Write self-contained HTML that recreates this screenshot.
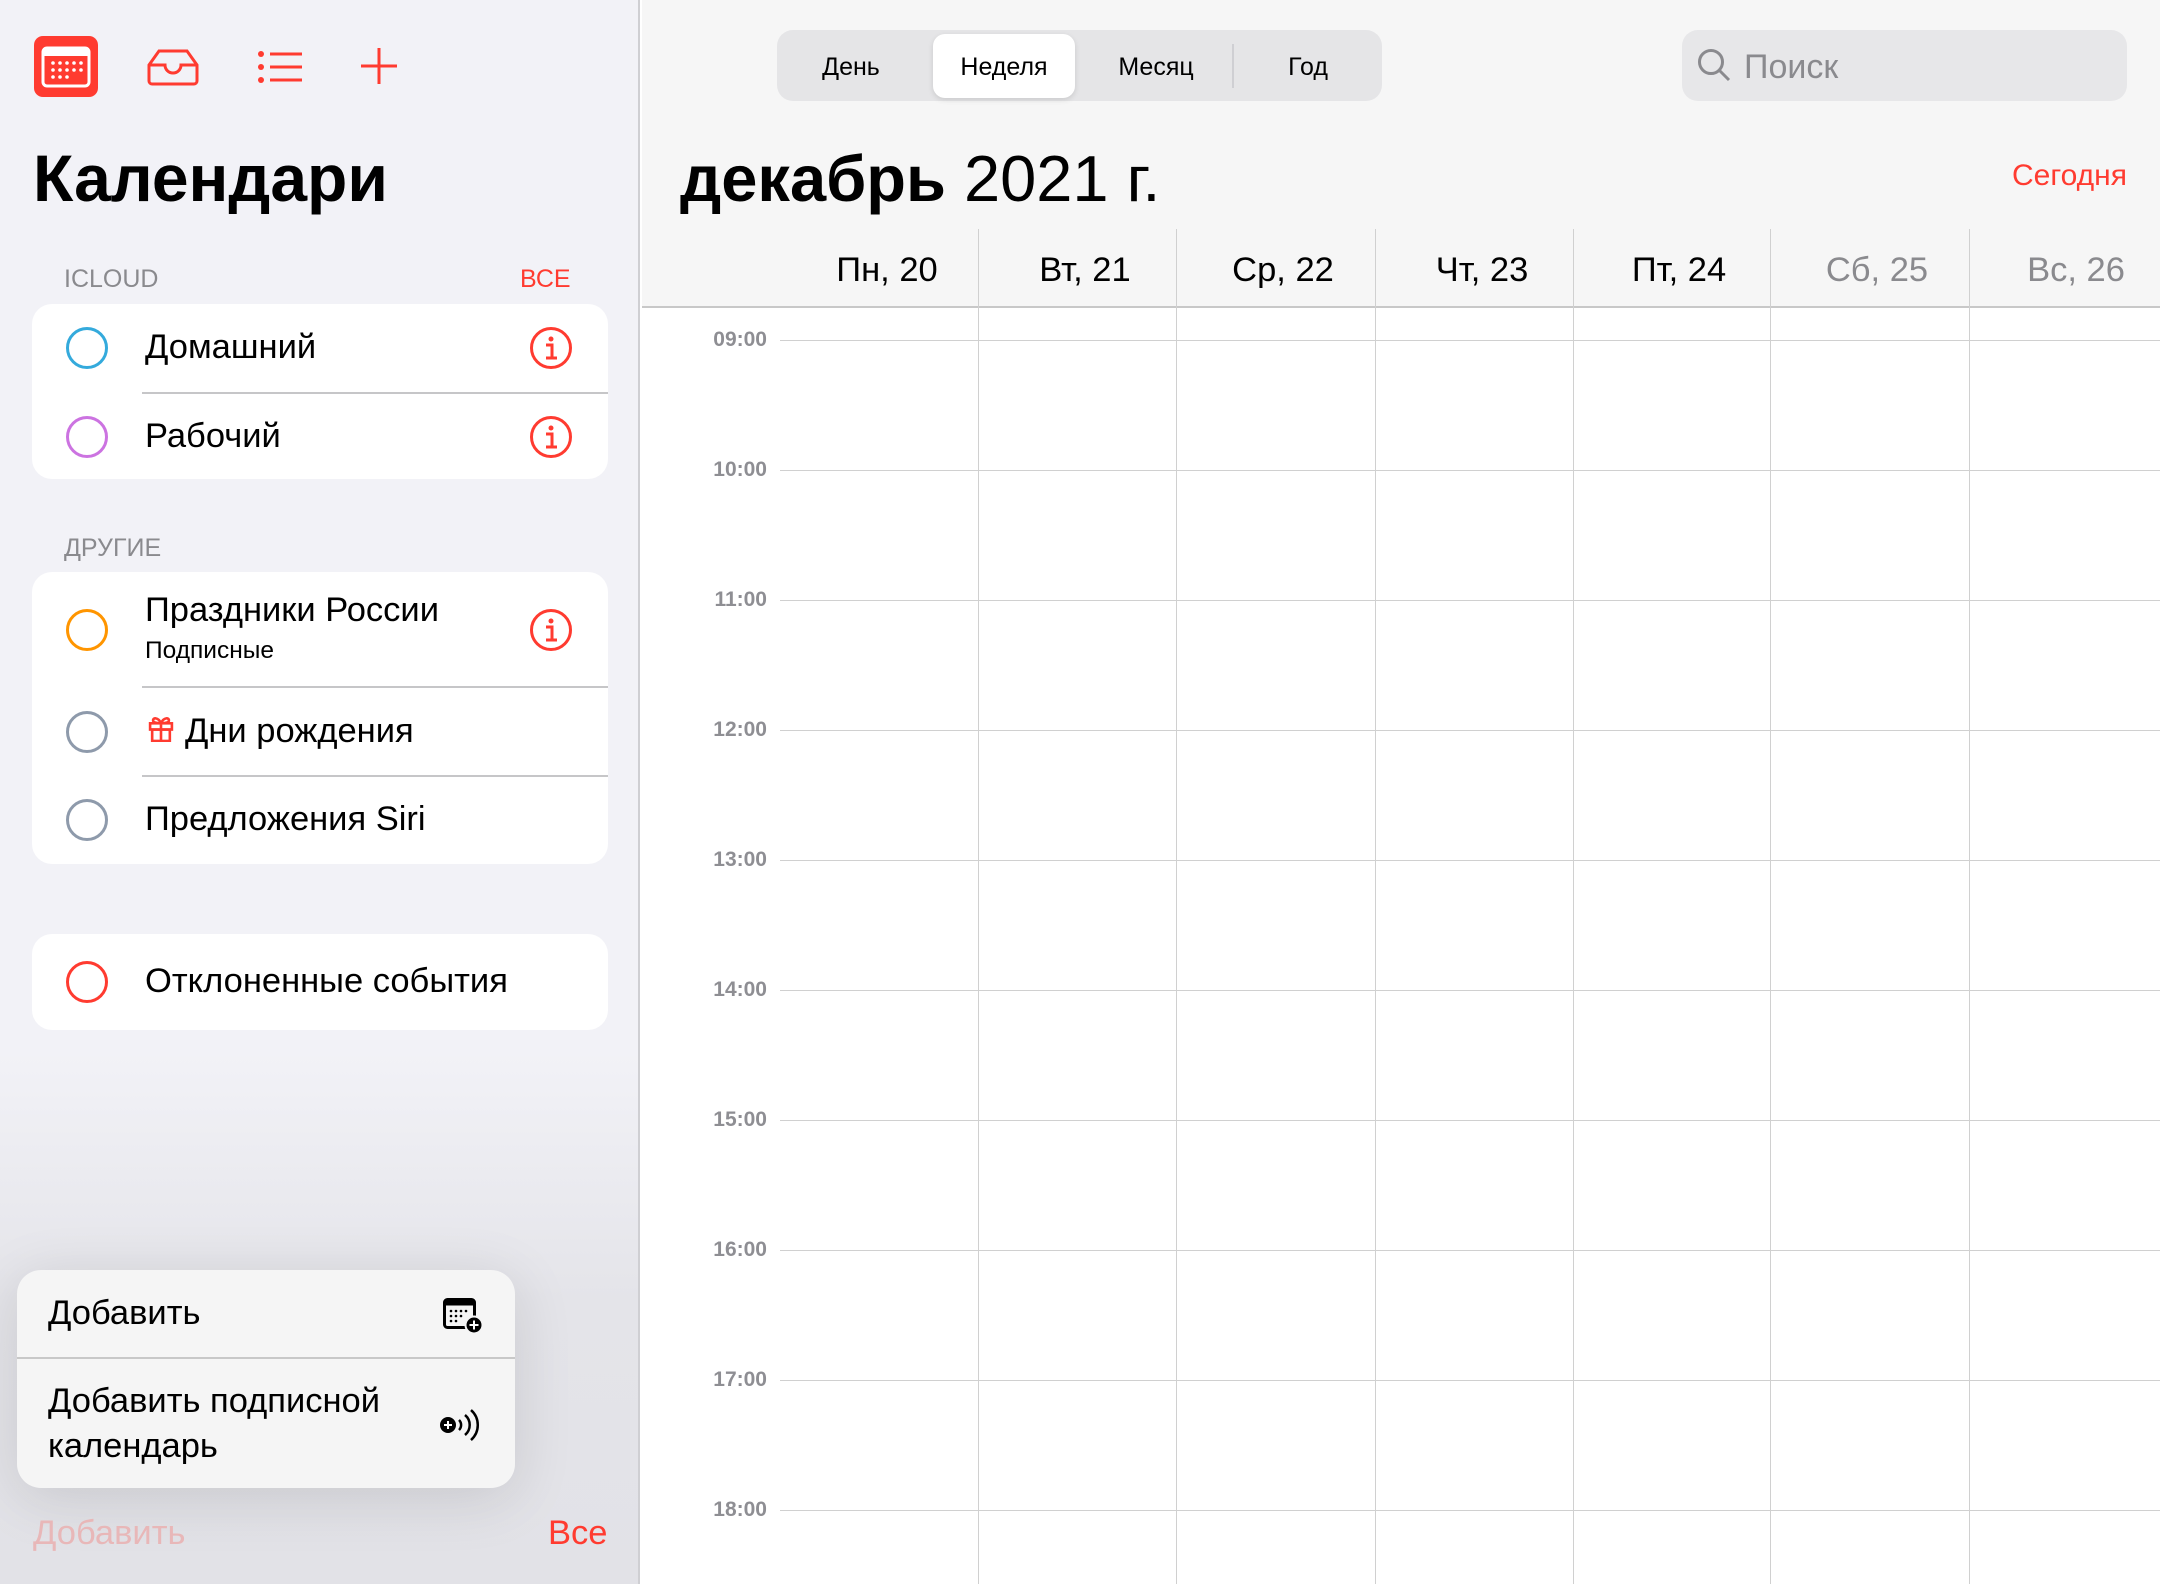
<!DOCTYPE html>
<html><head><meta charset="utf-8"><style>
*{margin:0;padding:0;box-sizing:border-box}
body{width:2160px;height:1584px;overflow:hidden;font-family:"Liberation Sans","DejaVu Sans",sans-serif;background:#fff;position:relative}
.a{position:absolute;white-space:nowrap}
#side{position:absolute;left:0;top:0;width:640px;height:1584px;background:linear-gradient(#f2f2f7 0,#f2f2f7 1050px,#e4e4e9 1300px,#e2e2e7 1584px);border-right:2px solid #cfcfd3}
.card{position:absolute;left:32px;width:576px;background:#fff;border-radius:20px}
.circ{position:absolute;left:66px;width:42px;height:42px;border-radius:50%;border:3px solid}
.lbl{position:absolute;left:145px;font-size:34.5px;color:#000}
.sep{position:absolute;left:142px;right:0;height:2px;background:#c6c6c8}
.info{position:absolute;left:530px;width:42px;height:42px}
.hdr{font-size:25px;color:#8a8a8e}
.hl{position:absolute;left:780px;right:0;height:1px;background:#d0d0d0}
.tl{position:absolute;right:1393px;font-size:21px;color:#8e8e93;font-weight:bold}
.vl{position:absolute;top:229px;width:1px;height:1355px;background:#d0d0d0}
.dh{position:absolute;top:251px;width:198px;text-align:center;font-size:34.5px}
.sg{position:absolute;top:53px;text-align:center;font-size:25px}
</style></head><body>
<div id="side">
 <svg class="a" style="left:34px;top:36px" width="64" height="61" viewBox="0 0 64 61"><rect width="64" height="61" rx="9" fill="#ff3b30"/><rect x="9" y="12" width="46" height="38" rx="4" fill="none" stroke="#fff" stroke-width="3"/><rect x="9" y="12" width="46" height="8" fill="#fff"/><g fill="#fff"><circle cx="19" cy="27" r="1.8"/><circle cx="26" cy="27" r="1.8"/><circle cx="33" cy="27" r="1.8"/><circle cx="40" cy="27" r="1.8"/><circle cx="47" cy="27" r="1.8"/><circle cx="19" cy="34" r="1.8"/><circle cx="26" cy="34" r="1.8"/><circle cx="33" cy="34" r="1.8"/><circle cx="40" cy="34" r="1.8"/><circle cx="47" cy="34" r="1.8"/><circle cx="19" cy="41" r="1.8"/><circle cx="26" cy="41" r="1.8"/><circle cx="33" cy="41" r="1.8"/></g></svg>
 <svg class="a" style="left:147px;top:48px" width="52" height="38" viewBox="0 0 52 38" fill="none" stroke="#ff3b30" stroke-width="3"><path d="M2 17 L12 3 H40 L50 17 V33 a3 3 0 0 1 -3 3 H5 a3 3 0 0 1 -3 -3 Z"/><path d="M2 17 H18 a8 8 0 0 0 16 0 H50"/></svg>
 <svg class="a" style="left:257px;top:50px" width="46" height="34" viewBox="0 0 46 34"><g fill="#ff3b30"><circle cx="4" cy="4" r="3"/><circle cx="4" cy="17" r="3"/><circle cx="4" cy="30" r="3"/></g><g stroke="#ff3b30" stroke-width="3"><path d="M13 4H45M13 17H45M13 30H45"/></g></svg>
 <svg class="a" style="left:361px;top:48px" width="36" height="36" viewBox="0 0 36 36" stroke="#ff3b30" stroke-width="3"><path d="M18 0V36M0 18H36"/></svg>
 <div class="a" style="left:33px;top:140px;font-size:66px;font-weight:bold;color:#000">Календари</div>
 <div class="a hdr" style="left:64px;top:265px">ICLOUD</div>
 <div class="a hdr" style="left:520px;top:265px;color:#ff3b30">ВСЕ</div>
 <div class="card" style="top:304px;height:175px">
  <div class="circ" style="left:34px;top:23px;border-color:#34aadc"></div><div class="lbl" style="left:113px;top:24px">Домашний</div>
  <div class="sep" style="left:110px;top:88px"></div>
  <div class="circ" style="left:34px;top:112px;border-color:#cc73e1"></div><div class="lbl" style="left:113px;top:113px">Рабочий</div>
  <svg class="info" style="left:498px;top:23px" viewBox="0 0 42 42"><circle cx="21" cy="21" r="19.5" fill="none" stroke="#ff3b30" stroke-width="3"/><circle cx="21" cy="12" r="2.5" fill="#ff3b30"/><path d="M16 18H22V31M16 31H27" stroke="#ff3b30" stroke-width="3" fill="none"/></svg>
  <svg class="info" style="left:498px;top:112px" viewBox="0 0 42 42"><circle cx="21" cy="21" r="19.5" fill="none" stroke="#ff3b30" stroke-width="3"/><circle cx="21" cy="12" r="2.5" fill="#ff3b30"/><path d="M16 18H22V31M16 31H27" stroke="#ff3b30" stroke-width="3" fill="none"/></svg>
 </div>
 <div class="a hdr" style="left:64px;top:534px">ДРУГИЕ</div>
 <div class="card" style="top:572px;height:292px">
  <div class="circ" style="left:34px;top:37px;border-color:#ff9500"></div>
  <div class="lbl" style="left:113px;top:19px">Праздники России</div>
  <div class="a" style="left:113px;top:65px;font-size:24.5px">Подписные</div>
  <svg class="info" style="left:498px;top:37px" viewBox="0 0 42 42"><circle cx="21" cy="21" r="19.5" fill="none" stroke="#ff3b30" stroke-width="3"/><circle cx="21" cy="12" r="2.5" fill="#ff3b30"/><path d="M16 18H22V31M16 31H27" stroke="#ff3b30" stroke-width="3" fill="none"/></svg>
  <div class="sep" style="left:110px;top:114px"></div>
  <div class="circ" style="left:34px;top:139px;border-color:#8e9aab"></div>
  <svg class="a" style="left:116px;top:143px" width="26" height="27" viewBox="0 0 25 26" fill="none" stroke="#ff3b30" stroke-width="2.5"><rect x="2" y="8" width="21" height="6"/><rect x="4" y="14" width="17" height="11"/><path d="M12.5 8V25M12.5 8C10 2 4 2 5 6 6 8 12.5 8 12.5 8 12.5 8 19 8 20 6 21 2 15 2 12.5 8"/></svg>
  <div class="lbl" style="left:153px;top:140px">Дни рождения</div>
  <div class="sep" style="left:110px;top:203px"></div>
  <div class="circ" style="left:34px;top:227px;border-color:#8e9aab"></div>
  <div class="lbl" style="left:113px;top:228px">Предложения Siri</div>
 </div>
 <div class="card" style="top:934px;height:96px">
  <div class="circ" style="left:34px;top:27px;border-color:#ff3b30"></div>
  <div class="lbl" style="left:113px;top:28px">Отклоненные события</div>
 </div>
 <div class="a" style="left:17px;top:1270px;width:498px;height:218px;background:#f5f5f5;border-radius:24px;box-shadow:0 10px 60px rgba(0,0,0,0.12)">
  <div class="a" style="left:31px;top:24px;font-size:34.5px">Добавить</div>
  <svg class="a" style="left:426px;top:28px" width="40" height="36" viewBox="0 0 40 36"><rect x="1.5" y="1.5" width="30" height="28" rx="3" fill="none" stroke="#000" stroke-width="3"/><rect x="1.5" y="1.5" width="30" height="6" fill="#000"/><g fill="#000"><circle cx="8" cy="13" r="1.3"/><circle cx="13" cy="13" r="1.3"/><circle cx="18" cy="13" r="1.3"/><circle cx="23" cy="13" r="1.3"/><circle cx="8" cy="18" r="1.3"/><circle cx="13" cy="18" r="1.3"/><circle cx="18" cy="18" r="1.3"/><circle cx="8" cy="23" r="1.3"/><circle cx="13" cy="23" r="1.3"/></g><circle cx="31" cy="27" r="8.5" fill="#000" stroke="#f5f5f5" stroke-width="2"/><path d="M31 22.5V31.5M26.5 27H35.5" stroke="#fff" stroke-width="2"/></svg>
  <div class="a" style="left:0;top:87px;width:498px;height:2px;background:#c8c8c8"></div>
  <div class="a" style="left:31px;top:109px;font-size:34.5px;line-height:45px">Добавить подписной<br>календарь</div>
  <svg class="a" style="left:421px;top:138px" width="46" height="34" viewBox="0 0 46 34"><circle cx="10" cy="17" r="8" fill="#000"/><path d="M10 13V21M6 17H14" stroke="#fff" stroke-width="2"/><g fill="none" stroke="#000" stroke-width="2.5"><path d="M21 12a7 7 0 0 1 0 10"/><path d="M27 7a13 13 0 0 1 0 20"/><path d="M33 2a20 20 0 0 1 0 30"/></g></svg>
 </div>
 <div class="a" style="left:33px;top:1514px;font-size:34.5px;color:#e8b7b8">Добавить</div>
 <div class="a" style="left:548px;top:1514px;font-size:34.5px;color:#ff3b30">Все</div>
</div>
<div class="a" style="left:642px;top:0;width:1518px;height:308px;background:#f6f6f6;border-bottom:2px solid #c8c8c8"></div>
<div class="a" style="left:777px;top:30px;width:605px;height:71px;background:#e5e5e7;border-radius:16px"></div>
<div class="a" style="left:933px;top:34px;width:142px;height:64px;background:#fff;border-radius:12px;box-shadow:0 2px 6px rgba(0,0,0,0.12)"></div>
<div class="a" style="left:1232px;top:44px;width:2px;height:44px;background:#cfcfd3"></div>
<div class="sg" style="left:777px;width:148px">День</div>
<div class="sg" style="left:933px;width:142px">Неделя</div>
<div class="sg" style="left:1080px;width:152px">Месяц</div>
<div class="sg" style="left:1234px;width:148px">Год</div>
<div class="a" style="left:1682px;top:30px;width:445px;height:71px;background:#e7e7e9;border-radius:16px"></div>
<svg class="a" style="left:1697px;top:48px" width="34" height="34" viewBox="0 0 34 34" fill="none" stroke="#8a8a8e" stroke-width="3"><circle cx="14" cy="14" r="11.5"/><path d="M22.5 22.5L32 32"/></svg>
<div class="a" style="left:1744px;top:48px;font-size:34px;color:#8a8a8e">Поиск</div>
<div class="a" style="left:680px;top:141px;font-size:65px;color:#000"><b>декабрь</b> 2021 г.</div>
<div class="a" style="left:1990px;top:159px;width:137px;text-align:right;font-size:30px;color:#ff3b30">Сегодня</div>
<div class="vl" style="left:978px"></div><div class="vl" style="left:1176px"></div><div class="vl" style="left:1375px"></div><div class="vl" style="left:1573px"></div><div class="vl" style="left:1770px"></div><div class="vl" style="left:1969px"></div>
<div class="dh" style="left:788px">Пн, 20</div><div class="dh" style="left:986px">Вт, 21</div><div class="dh" style="left:1184px">Ср, 22</div><div class="dh" style="left:1383px">Чт, 23</div><div class="dh" style="left:1580px">Пт, 24</div><div class="dh" style="left:1778px;color:#8a8a8e">Сб, 25</div><div class="dh" style="left:1977px;color:#8a8a8e">Вс, 26</div>
<div class="hl" style="top:340px"></div><div class="tl" style="top:328px">09:00</div>
<div class="hl" style="top:470px"></div><div class="tl" style="top:458px">10:00</div>
<div class="hl" style="top:600px"></div><div class="tl" style="top:588px">11:00</div>
<div class="hl" style="top:730px"></div><div class="tl" style="top:718px">12:00</div>
<div class="hl" style="top:860px"></div><div class="tl" style="top:848px">13:00</div>
<div class="hl" style="top:990px"></div><div class="tl" style="top:978px">14:00</div>
<div class="hl" style="top:1120px"></div><div class="tl" style="top:1108px">15:00</div>
<div class="hl" style="top:1250px"></div><div class="tl" style="top:1238px">16:00</div>
<div class="hl" style="top:1380px"></div><div class="tl" style="top:1368px">17:00</div>
<div class="hl" style="top:1510px"></div><div class="tl" style="top:1498px">18:00</div>
</body></html>
